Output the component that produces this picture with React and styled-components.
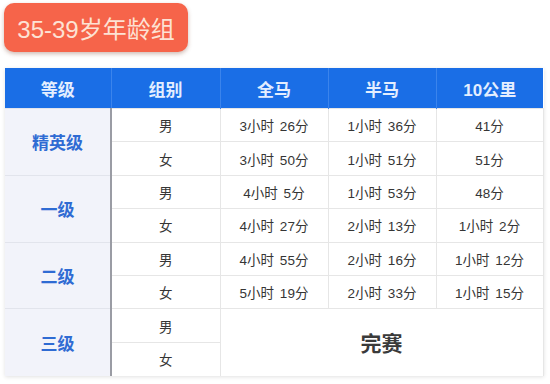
import React from "react";
import styled, { createGlobalStyle } from "styled-components";

const Global = createGlobalStyle`
  html, body { margin: 0; padding: 0; background: #ffffff; }
  body { font-family: "Liberation Sans", "Noto Sans CJK SC", sans-serif; }
`;

const Page = styled.div`
  width: 550px;
  height: 384px;
  box-sizing: border-box;
  padding: 3px 7px 0 5px;
  display: flex;
  flex-direction: column;
  background: #fff;
`;

const Badge = styled.div`
  align-self: flex-start;
  width: 184px;
  height: 49px;
  box-sizing: border-box;
  margin-left: -1px;
  border-radius: 10px;
  background: #f6644a;
  color: #fde2d4;
  font-size: 24px;
  display: flex;
  align-items: center;
  justify-content: center;
  box-shadow: 0 2px 4px rgba(120, 60, 40, 0.35);
`;

const Table = styled.table`
  margin-top: 16px;
  width: 538px;
  border-collapse: collapse;
  table-layout: fixed;
  box-shadow: 0 1px 4px rgba(0, 0, 0, 0.12);
`;

const HeadCell = styled.th`
  height: 40px;
  padding: 0;
  background: #1a6ee6;
  color: #e4eeff;
  font-size: 17px;
  font-weight: bold;
  text-align: center;
  border-left: 1px solid #3b84ec;
  &:first-child { border-left: none; }
`;

const Row = styled.tr`
  height: 33.4px;
`;

const LevelCell = styled.td`
  background: #f2f3fa;
  color: #2f6bd3;
  font-size: 17px;
  font-weight: bold;
  text-align: center;
  padding: 0;
  border-top: 1px solid #e2e4ec;
  border-right: 2px solid #9a9ca4;
`;

const Cell = styled.td`
  padding: 0;
  text-align: center;
  color: ${(p) => (p.$big ? "#3a3a3a" : "#353535")};
  font-size: ${(p) => (p.$big ? "21px" : "13.5px")};
  font-weight: ${(p) => (p.$big ? "bold" : "normal")};
  word-spacing: 2px;
  border-top: 1px solid #e6e6e6;
  border-left: 1px solid #e6e6e6;
  &:last-child { border-right: 1px solid #e6e6e6; }
`;

const levels = [
  { name: "精英级", rows: [["男", "3小时 26分", "1小时 36分", "41分"], ["女", "3小时 50分", "1小时 51分", "51分"]] },
  { name: "一级", rows: [["男", "4小时 5分", "1小时 53分", "48分"], ["女", "4小时 27分", "2小时 13分", "1小时 2分"]] },
  { name: "二级", rows: [["男", "4小时 55分", "2小时 16分", "1小时 12分"], ["女", "5小时 19分", "2小时 33分", "1小时 15分"]] },
];

export default function App() {
  return (
    <>
      <Global />
      <Page>
        <Badge>35-39岁年龄组</Badge>
        <Table>
          <colgroup>
            <col style={{ width: 106 }} />
            <col style={{ width: 109 }} />
            <col style={{ width: 108 }} />
            <col style={{ width: 108 }} />
            <col style={{ width: 107 }} />
          </colgroup>
          <thead>
            <tr>
              <HeadCell>等级</HeadCell>
              <HeadCell>组别</HeadCell>
              <HeadCell>全马</HeadCell>
              <HeadCell>半马</HeadCell>
              <HeadCell>10公里</HeadCell>
            </tr>
          </thead>
          <tbody>
            {levels.map((lv) =>
              lv.rows.map((r, i) => (
                <Row key={lv.name + i}>
                  {i === 0 && <LevelCell rowSpan={2}>{lv.name}</LevelCell>}
                  {r.map((c, j) => (
                    <Cell key={j}>{c}</Cell>
                  ))}
                </Row>
              ))
            )}
            <Row>
              <LevelCell rowSpan={2}>三级</LevelCell>
              <Cell>男</Cell>
              <Cell rowSpan={2} colSpan={3} $big>完赛</Cell>
            </Row>
            <Row>
              <Cell>女</Cell>
            </Row>
          </tbody>
        </Table>
      </Page>
    </>
  );
}
